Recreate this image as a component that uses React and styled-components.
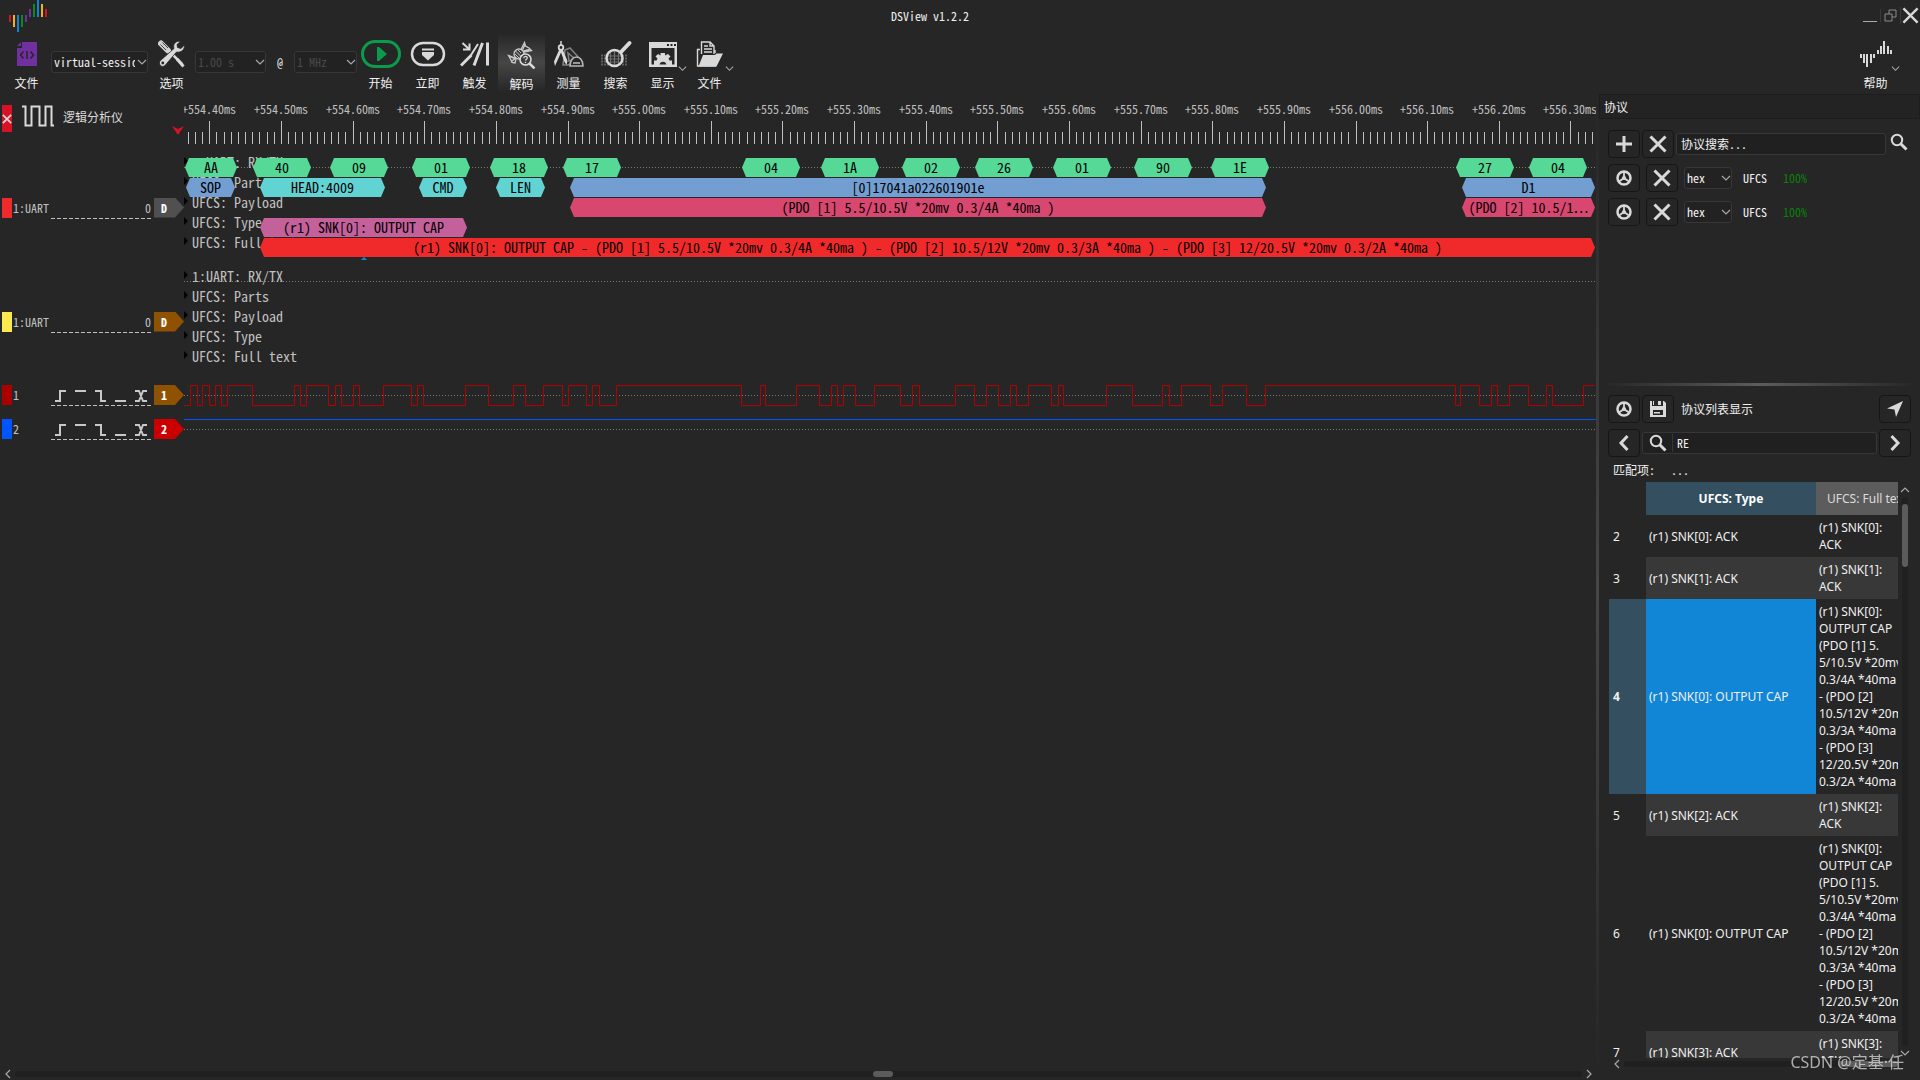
import React, { useState } from "react";
import styled, { createGlobalStyle, css } from "styled-components";

const mono = `"Noto Sans Mono CJK SC", "Liberation Mono", "Noto Sans CJK SC", monospace`;
const sans = `"Noto Sans", "Noto Sans CJK SC", sans-serif`;

const HEADER_W = 184;

// decoder annotations, start and end are distances on the time axis
const rxtx = [
  ["AA", 1, 53],
  ["40", 69, 127],
  ["09", 146, 204],
  ["01", 228, 286],
  ["18", 306, 364],
  ["17", 379, 437],
  ["04", 558, 616],
  ["1A", 637, 695],
  ["02", 718, 776],
  ["26", 791, 849],
  ["01", 869, 927],
  ["90", 950, 1008],
  ["1E", 1027, 1085],
  ["27", 1272, 1330],
  ["04", 1345, 1403],
].map(([text, start, end]) => ({ text, start, end, color: "#56d997" }));

const fullText =
  "(r1) SNK[0]: OUTPUT CAP - (PDO [1] 5.5/10.5V *20mv 0.3/4A *40ma ) - (PDO [2] 10.5/12V *20mv 0.3/3A *40ma ) - (PDO [3] 12/20.5V *20mv 0.3/2A *40ma )";

const decodedRows = [
  { name: "1:UART: RX/TX", axis: true, items: rxtx },
  {
    name: "UFCS: Parts",
    items: [
      { text: "SOP", start: 2, end: 51, color: "#729ed1" },
      { text: "HEAD:4009", start: 76, end: 201, color: "#62d3d3" },
      { text: "CMD", start: 235, end: 283, color: "#62d3d3" },
      { text: "LEN", start: 312, end: 361, color: "#62d3d3" },
      { text: "[0]17041a022601901e", start: 386, end: 1082, color: "#729ed1" },
      { text: "D1", start: 1278, end: 1411, color: "#729ed1" },
    ],
  },
  {
    name: "UFCS: Payload",
    items: [
      {
        text: "(PDO [1] 5.5/10.5V *20mv 0.3/4A *40ma )",
        start: 386,
        end: 1082,
        color: "#d8476f",
      },
      { text: "(PDO [2] 10.5/1⋯", start: 1278, end: 1411, color: "#d8476f" },
    ],
  },
  {
    name: "UFCS: Type",
    items: [
      {
        text: "(r1) SNK[0]: OUTPUT CAP",
        start: 76,
        end: 283,
        color: "#c4619a",
      },
    ],
  },
  {
    name: "UFCS: Full text",
    items: [{ text: fullText, start: 76, end: 1411, color: "#f02a2a" }],
  },
];

const emptyRows = decodedRows.map(({ name, axis }) => ({
  name,
  axis,
  items: [],
}));

// level changes of channel 1, it starts low
const edges = [
  6, 13, 18, 25, 31, 37, 43, 68, 110, 116, 122, 144, 151, 157, 169, 175, 199,
  227, 233, 239, 281, 304, 329, 341, 359, 378, 384, 402, 408, 415, 432, 557,
  576, 581, 612, 635, 647, 653, 659, 671, 690, 716, 728, 735, 771, 790, 802,
  814, 826, 832, 844, 867, 874, 879, 922, 948, 978, 985, 997, 1026, 1038, 1062,
  1081, 1271, 1276, 1295, 1307, 1313, 1325, 1344, 1362, 1368, 1399,
];

const wavePath =
  "M0 20.5" +
  edges
    .map((x, i) => `H${x + 0.5}V${i % 2 === 0 ? 0.5 : 20.5}`)
    .join("") +
  "H1411";

const longCell = `(r1) SNK[0]:
OUTPUT CAP
(PDO [1] 5.
5/10.5V *20mv
0.3/4A *40ma )
- (PDO [2]
10.5/12V *20mv
0.3/3A *40ma )
- (PDO [3]
12/20.5V *20mv
0.3/2A *40ma )`;

const tableRows = [
  { id: 2, type: "(r1) SNK[0]: ACK", full: "(r1) SNK[0]:\nACK" },
  { id: 3, type: "(r1) SNK[1]: ACK", full: "(r1) SNK[1]:\nACK" },
  { id: 4, type: "(r1) SNK[0]: OUTPUT CAP", full: longCell },
  { id: 5, type: "(r1) SNK[2]: ACK", full: "(r1) SNK[2]:\nACK" },
  { id: 6, type: "(r1) SNK[0]: OUTPUT CAP", full: longCell },
  { id: 7, type: "(r1) SNK[3]: ACK", full: "(r1) SNK[3]:\nACK" },
];

/* ---------- icons ---------- */

const Chevron = ({ dir = "down", w = 10 }) => {
  const paths = {
    down: "M1 3L5 7L9 3",
    up: "M1 7L5 3L9 7",
    left: "M7 1L3 5L7 9",
    right: "M3 1L7 5L3 9",
  };
  return (
    <svg width={w} height={w} viewBox="0 0 10 10" aria-hidden="true">
      <path d={paths[dir]} fill="none" stroke="#a8a8a8" strokeWidth="1.2" />
    </svg>
  );
};

const LogoBars = () => (
  <svg width="48" height="33" aria-hidden="true">
    {[
      [9, 15, 7, "#d81226"],
      [13, 15, 12, "#f5b021"],
      [17, 15, 17, "#1183d3"],
      [21, 15, 12, "#0d8a1d"],
      [25, 15, 7, "#7030a0"],
      [29, 9, 8, "#7030a0"],
      [33, 4, 13, "#0d8a1d"],
      [37, 0, 17, "#1183d3"],
      [41, 4, 13, "#f5b021"],
      [45, 9, 8, "#d81226"],
    ].map(([x, y, h, fill]) => (
      <rect key={x} x={x} y={y} width="2" height={h} fill={fill} />
    ))}
  </svg>
);

const HelpIcon = () => (
  <svg width="34" height="28" aria-hidden="true" fill="#d9d9d9">
    {[
      [1, 14, 4],
      [4, 14, 9],
      [7, 14, 13],
      [11, 14, 9],
      [14, 14, 4],
      [18, 10, 4],
      [21, 6, 8],
      [24, 1, 13],
      [28, 6, 8],
      [31, 10, 4],
    ].map(([x, y, h]) => (
      <rect key={x} x={x} y={y} width="2" height={h} />
    ))}
  </svg>
);

const SessionIcon = () => (
  <svg width="22" height="28" viewBox="0 0 22 28" aria-hidden="true">
    <path d="M6 2H21V26H1V8H6Z" fill="#7030a0" />
    <path d="M1 6L5 2V6Z" fill="#7030a0" />
    <path
      d="M7.500 11.500L4.500 15L7.500 18.500M14.500 11.500L17.500 15L14.500 18.500M11 11V19"
      fill="none"
      stroke="#262626"
      strokeWidth="1.500"
    />
  </svg>
);

const OptionsIcon = () => (
  <svg width="28" height="28" viewBox="0 0 28 28" aria-hidden="true">
    <path
      d="M3 3.500L10 10.500"
      stroke="#cfcfcf"
      strokeWidth="6"
      strokeLinecap="round"
    />
    <path
      d="M2.500 4.500L8 10M4.500 2.500L10 8"
      stroke="#262626"
      strokeWidth="0.800"
    />
    <path d="M11 11L24.500 24.500" stroke="#d9d9d9" strokeWidth="2.500" />
    <path d="M19 19L25.500 26.500" stroke="#d9d9d9" strokeWidth="3" />
    <path
      d="M22.500 1.500C18 0.500 14.500 4 16 8.500L2.500 20.500C-0.500 23.500 3.500 28.500 7 25.500L18.500 12C23 13 27 9.500 26.500 5L23 8.500L19.500 7.500L19 4.500Z"
      fill="#d9d9d9"
      stroke="#262626"
      strokeWidth="0.800"
    />
    <circle cx="4.800" cy="23" r="1.400" fill="#262626" />
  </svg>
);

const StartIcon = () => (
  <svg width="42" height="28" viewBox="0 0 42 28" aria-hidden="true">
    <rect
      x="2.500"
      y="1.500"
      width="37"
      height="25"
      rx="12.500"
      fill="none"
      stroke="#0a9b4b"
      strokeWidth="3"
    />
    <path d="M17 7H19L27 14L19 21H17Z" fill="#0a9b4b" />
  </svg>
);

const InstantIcon = () => (
  <svg width="36" height="28" viewBox="0 0 36 28" aria-hidden="true">
    <rect
      x="2"
      y="3"
      width="32"
      height="22"
      rx="11"
      fill="none"
      stroke="#d9d9d9"
      strokeWidth="2.500"
    />
    <path d="M12 8.500H24V10.500H12ZM12 12H24V15L18 20.500L12 15Z" fill="#d9d9d9" />
  </svg>
);

const TriggerIcon = () => (
  <svg width="30" height="28" viewBox="0 0 30 28" aria-hidden="true">
    <path
      d="M1 25.500L11.500 15M14 25.500L22.500 3M27.500 2.500V25.500"
      fill="none"
      stroke="#d9d9d9"
      strokeWidth="3"
    />
    <path d="M11 15L18 4" stroke="#d9d9d9" strokeWidth="2" />
    <path
      d="M2.500 3L9 9M9.500 3.500V9.500H3"
      fill="none"
      stroke="#d9d9d9"
      strokeWidth="2"
    />
  </svg>
);

const DecodeIcon = () => (
  <svg width="30" height="28" viewBox="0 0 30 28" aria-hidden="true">
    <g fill="none" stroke="#c9c9c9" strokeWidth="1.300">
      <circle cx="12" cy="13" r="5" />
      <path d="M8 17L1.500 14.500L3.500 18L5 21.500L8 22L9 18M3 15.500L8 18M5 20L9 17" />
      <path d="M14 8.500L17.500 1.500L18.500 5L22 7L24.500 9.500L17 11M18 3.500L15.500 9M22.500 8.500L16.500 10" />
      <path d="M8.500 10L15 16.500M10.500 8.500L14 12M8 13L12 17" strokeWidth="1" />
    </g>
    <circle
      cx="18.500"
      cy="18.500"
      r="5.500"
      fill="#3c3c3c"
      stroke="#d9d9d9"
      strokeWidth="1.600"
    />
    <path d="M22.500 22.500L27.500 27.500" stroke="#d9d9d9" strokeWidth="2.500" />
    <path
      d="M16.800 17.200C16.800 14.800 20.300 14.900 20.200 17C20.100 18.300 18.500 18.300 18.500 19.600M18.500 20.700V22"
      fill="none"
      stroke="#d9d9d9"
      strokeWidth="1.300"
    />
  </svg>
);

const MeasureIcon = () => (
  <svg width="32" height="28" viewBox="0 0 32 28" aria-hidden="true">
    <g fill="none" stroke="#808080" strokeWidth="1.600">
      <path d="M12 10L17 8L27 19L15 25L10 25Z" />
      <path d="M15 13L22 19L16 21Z" />
      <path d="M17 26C17 14 30 14 30 26Z" fill="#262626" stroke="#b5b5b5" />
      <path d="M20 23H27" stroke="#b5b5b5" />
    </g>
    <path d="M8 1V5" stroke="#d9d9d9" strokeWidth="1.500" />
    <circle
      cx="8"
      cy="7.500"
      r="2.300"
      fill="none"
      stroke="#d9d9d9"
      strokeWidth="1.800"
    />
    <path
      d="M6.500 9H9.500L14.500 21L13.500 25L11.500 22L8 12.500L4 21.500L2 26L1 21.500Z"
      fill="#d9d9d9"
    />
  </svg>
);

const SearchTextIcon = () => (
  <svg width="34" height="28" viewBox="0 0 34 28" aria-hidden="true">
    <path
      d="M2 15.500H28M2 18.500H28M2 21.500H28M2 24.500H28"
      stroke="#606060"
      strokeWidth="2"
      strokeDasharray="2 1"
    />
    <circle cx="15.500" cy="18" r="8" fill="#262626" />
    <path
      d="M9 16H22M9 19H22M11 22H20M11.500 13V23M15.500 11V25M19.500 13V23"
      stroke="#707070"
      strokeWidth="1.200"
    />
    <circle
      cx="15.500"
      cy="18"
      r="8"
      fill="none"
      stroke="#d9d9d9"
      strokeWidth="2.500"
    />
    <path
      d="M22 12L30.500 3"
      stroke="#d9d9d9"
      strokeWidth="4"
      strokeLinecap="round"
    />
  </svg>
);

const DisplayIcon = () => (
  <svg width="30" height="28" viewBox="0 0 30 28" aria-hidden="true">
    <path d="M1 2H29V27H1ZM3.500 8V24.500H26.500V8Z" fill="#d9d9d9" fillRule="evenodd" />
    <path d="M19 4H21V6H19ZM22.500 4H24.500V6H22.500ZM26 4H28V6H26Z" fill="#262626" />
    <path
      d="M6 25V20.500H8.500L9.500 18.500L7.500 16.500L10 14L12.500 15.500V13H17V15.500L20 14L22.500 16.500L20.500 18.500L21.500 20.500H24V25H18.500C18.500 20.500 11.500 20.500 11.500 25Z"
      fill="#d9d9d9"
    />
  </svg>
);

const FolderIcon = () => (
  <svg width="28" height="28" viewBox="0 0 28 28" aria-hidden="true">
    <path
      d="M5.500 14V2H14L18 6V14M14 2V6H18M8 6H12M8 9H16M8 12H16"
      fill="none"
      stroke="#d9d9d9"
      strokeWidth="1.400"
    />
    <path
      d="M4 9.500H1.500V26H20M19 10V13"
      fill="none"
      stroke="#d9d9d9"
      strokeWidth="1.400"
    />
    <path d="M7 15H19L20.500 13.500H27L20.500 26.500H2.500Z" fill="#d9d9d9" />
  </svg>
);

const PlusIcon = () => (
  <svg width="18" height="18" aria-hidden="true">
    <path d="M9 1V17M1 9H17" stroke="#d9d9d9" strokeWidth="3" />
  </svg>
);

const CrossIcon = ({ size = 18, width = 3 }) => (
  <svg width={size} height={size} viewBox="0 0 18 18" aria-hidden="true">
    <path
      d="M1.500 1.500L16.500 16.500M16.500 1.500L1.500 16.500"
      stroke="#d9d9d9"
      strokeWidth={width}
    />
  </svg>
);

const WheelIcon = () => (
  <svg width="16" height="16" viewBox="0 0 16 16" aria-hidden="true">
    <circle cx="8" cy="8" r="6.500" fill="none" stroke="#d9d9d9" strokeWidth="2.500" />
    <path
      d="M8 8V2M8 8L3 11.500M8 8L13 11.500"
      stroke="#d9d9d9"
      strokeWidth="1.800"
    />
    <circle cx="8" cy="8" r="2" fill="#d9d9d9" />
  </svg>
);

const LensIcon = () => (
  <svg width="18" height="18" viewBox="0 0 18 18" aria-hidden="true">
    <circle cx="7" cy="7" r="5.200" fill="none" stroke="#d9d9d9" strokeWidth="2" />
    <path d="M10.500 10.500L16.500 16.500" stroke="#d9d9d9" strokeWidth="3" />
  </svg>
);

const SaveIcon = () => (
  <svg width="18" height="18" viewBox="0 0 18 18" aria-hidden="true">
    <path
      d="M1 1H3V6H14V1H15L17 3V17H1ZM4 10V15H14V10Z"
      fill="#d9d9d9"
      fillRule="evenodd"
    />
    <path d="M4 1H5V5H4ZM9 1H12V5H9ZM5 12H11V13.500H5Z" fill="#d9d9d9" />
  </svg>
);

const SendIcon = () => (
  <svg width="18" height="18" viewBox="0 0 18 18" aria-hidden="true">
    <path d="M17 1L10 17L8.500 9.500L1 8.500Z" fill="#d9d9d9" />
  </svg>
);

const ArrowIcon = ({ dir }) => (
  <svg width="12" height="18" viewBox="0 0 12 18" aria-hidden="true">
    <path
      d={dir === "left" ? "M9.500 2L3 9L9.500 16" : "M2.500 2L9 9L2.500 16"}
      fill="none"
      stroke="#d9d9d9"
      strokeWidth="3"
    />
  </svg>
);

const triggers = {
  上升沿: "M0 11H5V1H11",
  高电平: "M0 1H11",
  下降沿: "M0 1H6V11H11",
  低电平: "M0 11H11",
  双边沿: "M0 1H4L8 11H12M0 11H4L8 1H12",
};

/* ---------- parts ---------- */

const GlobalStyle = createGlobalStyle`
  * {
    box-sizing: border-box;
  }
  body {
    margin: 0;
    background: #262626;
    color: #f0f0f0;
    font: 12px/16px ${mono};
    overflow: hidden;
  }
  button, input, select {
    margin: 0;
    padding: 0;
    border: none;
    background: none;
    color: inherit;
    font: inherit;
    outline: none;
  }
  svg {
    display: block;
    flex: none;
  }
`;

const Window = styled.div`
  display: flex;
  flex-direction: column;
  height: 100vh;
`;

const TitleBar = styled.header`
  display: grid;
  grid-template-columns: 1fr 60px;
  height: 33px;
`;

const Logo = styled.div`
  grid-area: 1 / 1;
`;

const Title = styled.h1`
  grid-area: 1 / 1;
  margin: 0;
  padding-top: 8px;
  font-size: 12px;
  font-weight: normal;
  text-align: center;
`;

const WindowButtons = styled.div`
  display: flex;
  align-items: center;
  height: 30px;
`;

const WindowButton = styled.button`
  display: flex;
  justify-content: center;
  width: 20px;
  & + & {
    border-left: 1px solid #3a3a3a;
  }
`;

const Toolbar = styled.nav`
  display: flex;
  align-items: flex-start;
  height: 60px;
  padding: 0 21px 0 3px;
`;

const ToolButton = styled.button`
  position: relative;
  display: flex;
  flex: none;
  flex-direction: column;
  align-items: center;
  gap: 7px;
  width: 47px;
  height: 59px;
  padding-top: 7px;
  ${(p) =>
    p.$active &&
    css`
      padding-top: 8px;
      background: linear-gradient(#262626, #464646 50%, #262626);
    `}
`;

const MenuMark = styled.span`
  position: absolute;
  right: -1px;
  top: 31px;
`;

const Spacer = styled.div`
  flex: 1;
`;

const ComboBox = styled.span`
  position: relative;
  display: block;
  flex: none;
  width: ${(p) => p.$width}px;
  margin: ${(p) => p.$margin || "0"};
  color: ${(p) => (p.$dim ? "#4a4a4a" : "#f0f0f0")};
  svg {
    position: absolute;
    right: 1px;
    top: 6px;
  }
  select {
    appearance: none;
    display: block;
    width: 100%;
    height: 22px;
    padding: 0 12px 0 2px;
    border: 1px solid #373737;
    border-radius: 3px;
    background: #222222;
    color: inherit;
    opacity: 1;
  }
`;

const At = styled.span`
  width: 28px;
  margin-top: 21px;
  text-align: center;
`;

const Workspace = styled.main`
  display: flex;
  flex: 1;
  min-height: 0;
`;

const Session = styled.section`
  display: flex;
  flex: 1;
  flex-direction: column;
  min-width: 0;
`;

const Splitter = styled.div`
  flex: none;
  width: 3px;
  background: linear-gradient(#262626, #464646 50%, #262626);
`;

const SplitRow = styled.div`
  display: grid;
  grid-template-columns: ${HEADER_W}px 1fr;
  color: #c0c0c0;
`;

const LogicRow = styled(SplitRow)`
  height: 20px;
`;

const DeviceHead = styled.div`
  position: relative;
  display: flex;
  align-items: flex-start;
  gap: 8px;
  height: 65px;
  padding: 12px 0 0 2px;
  color: #d9d9d9;
  > svg:last-child {
    position: absolute;
    right: 0;
    top: 33px;
  }
`;

const CloseDevice = styled.button`
  display: flex;
  align-items: center;
  width: 10px;
  height: 27px;
  margin-right: 1px;
  background: #d81226;
`;

const DeviceName = styled.span`
  margin-top: 4px;
`;

const Ruler = styled.div`
  position: relative;
  height: 65px;
  overflow: hidden;
  svg {
    width: 100%;
    height: 51px;
  }
`;

const RulerLabel = styled.span`
  position: absolute;
  top: 8px;
  transform: translateX(-50%);
`;

const Signals = styled.div`
  display: flex;
  flex-direction: column;
  gap: 14px;
  & + & {
    margin-top: 13px;
  }
`;

const SignalHead = styled.div`
  display: flex;
  align-items: center;
  align-self: center;
  height: 20px;
  padding-left: 2px;
  margin-bottom: 1px;
`;

const Swatch = styled.span`
  flex: none;
  width: 10px;
  height: 20px;
  margin-right: 1px;
  background: ${(p) => p.$color};
`;

const SignalName = styled.span`
  width: 38px;
  white-space: nowrap;
`;

const SignalTools = styled.div`
  display: flex;
  justify-content: ${(p) => (p.$end ? "flex-end" : "flex-start")};
  align-items: center;
  width: 100px;
  height: 21px;
  margin: 1px 3px 0 0;
  background: repeating-linear-gradient(90deg, #c0c0c0 0 4px, transparent 4px 6px)
    bottom / 100% 1px no-repeat;
`;

const TriggerButton = styled.button`
  display: flex;
  justify-content: center;
  width: 20px;
`;

const Tag = styled.span`
  width: 30px;
  height: 20px;
  padding-left: 7px;
  background: ${(p) => p.$color};
  clip-path: polygon(0 0, 21px 0, 100% 50%, 21px 100%, 0 100%);
  color: #ffffff;
  font-weight: bold;
  line-height: 20px;
`;

const DecodeArea = styled.div`
  position: relative;
  min-width: 0;
`;

const DecodeRow = styled.div`
  position: relative;
  height: 20px;
  ${(p) =>
    p.$axis &&
    css`
      background: repeating-linear-gradient(
          90deg,
          #7a7a7a 0 1px,
          transparent 1px 3px
        )
        0 9px / 100% 1px no-repeat;
    `}
`;

const RowName = styled.span`
  position: absolute;
  left: 0;
  top: -6px;
  padding-left: 8px;
  font-size: 14px;
  line-height: 20px;
  white-space: pre;
  &::before {
    content: "";
    position: absolute;
    left: 0;
    top: 5px;
    border: 4px solid transparent;
    border-left-color: #000000;
    border-right: none;
  }
`;

const Annotation = styled.span`
  position: absolute;
  top: 0;
  height: 19px;
  overflow: hidden;
  clip-path: polygon(
    4px 0,
    calc(100% - 4px) 0,
    100% 50%,
    calc(100% - 4px) 100%,
    4px 100%,
    0 50%
  );
  color: #000000;
  font-size: 14px;
  line-height: 19px;
  text-align: center;
  white-space: nowrap;
`;

const ExpandMark = styled.span`
  position: absolute;
  left: 177px;
  bottom: -2px;
  border: 3px solid transparent;
  border-top: none;
  border-bottom-color: #1185d6;
`;

const Wave = styled.svg`
  width: 100%;
  height: 21px;
`;

const ScrollBar = styled.div`
  display: flex;
  flex-direction: ${(p) => (p.$vertical ? "column" : "row")};
  align-items: center;
  gap: 2px;
  padding: ${(p) => p.$pad || "0"};
`;

const Groove = styled.div`
  display: flex;
  flex: 1;
  flex-direction: ${(p) => (p.$vertical ? "column" : "row")};
  border-radius: 3px;
  background: #202020;
  ${(p) => (p.$vertical ? "width: 6px;" : "height: 6px;")}
`;

const Thumb = styled.div`
  flex: none;
  width: ${(p) => p.$w || 6}px;
  height: ${(p) => p.$h || 6}px;
  margin-top: ${(p) => p.$top || 0}px;
  margin-left: ${(p) => p.$left || "0"};
  border-radius: 3px;
  background: #5c5c5c;
`;

const Dock = styled.aside`
  display: flex;
  flex: none;
  flex-direction: column;
  width: 321px;
  padding-top: 1px;
`;

const DockTitle = styled.h2`
  flex: none;
  height: 25px;
  margin: 0;
  padding-left: 4px;
  border: 1px solid #1d1d1d;
  background: #232323;
  font-size: 12px;
  font-weight: normal;
  line-height: 24px;
`;

const DecoderList = styled.div`
  display: flex;
  flex: none;
  flex-direction: column;
  gap: 6px;
  height: 264px;
  padding: 11px 9px 0;
`;

const DockRow = styled.div`
  display: flex;
  align-items: center;
  gap: ${(p) => p.$gap || 2}px;
`;

const SquareButton = styled.button`
  display: flex;
  flex: none;
  align-items: center;
  justify-content: center;
  width: 32px;
  height: 28px;
  border: 1px solid #161616;
  border-radius: 4px;
`;

const IconButton = styled.button`
  padding: 0 3px 4px 2px;
`;

const Field = styled.div`
  display: flex;
  flex: 1;
  align-items: center;
  min-width: 0;
  height: 22px;
  border: 1px solid #373737;
  border-radius: 3px;
  background: #202020;
  input {
    flex: 1;
    min-width: 0;
    padding-left: 4px;
  }
  input::placeholder {
    color: #f0f0f0;
    opacity: 1;
  }
  button {
    display: flex;
    justify-content: center;
    width: 30px;
    border-right: 1px solid #373737;
  }
`;

const DecoderName = styled.span`
  width: 34px;
  margin-left: 5px;
`;

const Progress = styled.span`
  color: #0a800a;
`;

const DockSplitter = styled.div`
  flex: none;
  height: 3px;
  margin: 0 3px;
  background: linear-gradient(90deg, #262626, #5c5c5c 50%, #262626);
`;

const ResultPane = styled.div`
  display: flex;
  flex: 1;
  flex-direction: column;
  gap: 6px;
  min-height: 0;
  padding: 9px 9px 0;
`;

const PaneTitle = styled.span`
  flex: 1;
  padding-left: 5px;
`;

const MatchLine = styled.div`
  display: flex;
  gap: 16px;
  padding: 0 5px;
  line-height: 13px;
`;

const ResultGrid = styled.div`
  display: grid;
  flex: 1;
  grid-template-columns: 1fr 13px;
  grid-template-rows: 1fr 22px;
  min-height: 0;
  padding-left: 1px;
`;

const TableView = styled.div`
  overflow: hidden;
`;

const ResultTable = styled.table`
  width: 309px;
  border-collapse: collapse;
  table-layout: fixed;
  font: 12px/17px ${sans};
  th,
  td {
    padding: 4px 3px;
    text-align: left;
    white-space: pre;
  }
  tbody th {
    padding-left: 4px;
    font-weight: normal;
  }
  thead th {
    height: 33px;
    padding: 0;
    text-align: center;
  }
`;

const HeadCell = styled.th`
  background: ${(p) => (p.$current ? "#344f60" : "#5c5c5c")};
  color: ${(p) => (p.$current ? "#ffffff" : "#dcdcdc")};
  font-weight: ${(p) => (p.$current ? "bold" : "normal")};
`;

const TableRow = styled.tr`
  td {
    background: ${(p) => (p.$alt ? "#383838" : "transparent")};
  }
  ${(p) =>
    p.$current &&
    css`
      th[scope="row"] {
        background: #344f60;
        font-weight: bold;
      }
      td:nth-child(2) {
        background: #1185d6;
      }
    `}
`;

const Watermark = styled.div`
  position: fixed;
  right: 16px;
  bottom: 6px;
  color: rgba(220, 220, 220, 0.75);
  font: 16px/24px ${sans};
`;

/* ---------- views ---------- */

function Combo({ label, options, width, margin, dim }) {
  return (
    <ComboBox $width={width} $margin={margin} $dim={dim}>
      <select aria-label={label} disabled={dim}>
        {options.map((o) => (
          <option key={o}>{o}</option>
        ))}
      </select>
      <Chevron />
    </ComboBox>
  );
}

function Tool({ icon, label, active, menu, onClick }) {
  return (
    <ToolButton $active={active} onClick={onClick}>
      {icon}
      {label}
      {menu && (
        <MenuMark>
          <Chevron w={9} />
        </MenuMark>
      )}
    </ToolButton>
  );
}

function TimeRuler() {
  const step = 71.64;
  const first = 25.3;
  const ticks = [];
  for (let i = -3; i <= 193; i++) {
    const x = Math.round(first + (i * step) / 10) + 0.5;
    ticks.push(`M${x} ${i % 10 === 0 ? 28 : 39}V51`);
  }
  return (
    <Ruler>
      <svg>
        <path d={ticks.join("")} stroke="#c0c0c0" />
      </svg>
      {Array.from({ length: 20 }, (_, i) => (
        <RulerLabel key={i} style={{ left: Math.round(first + i * step) }}>
          +{(554.4 + i / 10).toFixed(2)}ms
        </RulerLabel>
      ))}
    </Ruler>
  );
}

function DecodeSignal({ swatch, tag, rows, mark }) {
  return (
    <SplitRow>
      <SignalHead>
        <Swatch $color={swatch} />
        <SignalName>1:UART</SignalName>
        <SignalTools $end>0</SignalTools>
        <Tag $color={tag}>D</Tag>
      </SignalHead>
      <DecodeArea>
        {rows.map((row) => (
          <DecodeRow key={row.name} $axis={row.axis}>
            <RowName>{row.name}</RowName>
            {row.items.map((a) => (
              <Annotation
                key={a.start}
                style={{
                  left: a.start,
                  width: a.end - a.start,
                  background: a.color,
                }}
              >
                {a.text}
              </Annotation>
            ))}
          </DecodeRow>
        ))}
        {mark && <ExpandMark />}
      </DecodeArea>
    </SplitRow>
  );
}

function LogicSignal({ name, swatch, tag, children }) {
  return (
    <LogicRow>
      <SignalHead>
        <Swatch $color={swatch} />
        <SignalName>{name}</SignalName>
        <SignalTools>
          {Object.entries(triggers).map(([title, d]) => (
            <TriggerButton key={title} aria-label={title}>
              <svg width="12" height="12">
                <path d={d} fill="none" stroke="#c8c8c8" strokeWidth="2" />
              </svg>
            </TriggerButton>
          ))}
        </SignalTools>
        <Tag $color={tag}>{name}</Tag>
      </SignalHead>
      <Wave>
        <path d="M0 10.5H3000" stroke="#7a7a7a" strokeDasharray="1 2" />
        {children}
      </Wave>
    </LogicRow>
  );
}

function DecoderItem() {
  return (
    <DockRow $gap={6}>
      <SquareButton aria-label="设置">
        <WheelIcon />
      </SquareButton>
      <SquareButton aria-label="删除">
        <CrossIcon />
      </SquareButton>
      <Combo label="格式" options={["hex"]} width={48} />
      <DecoderName>UFCS</DecoderName>
      <Progress>100%</Progress>
    </DockRow>
  );
}

export default function App() {
  const [tool, setTool] = useState("解码");
  const [query, setQuery] = useState("RE");
  const [selected, setSelected] = useState(4);

  return (
    <Window>
      <GlobalStyle />
      <TitleBar>
        <Logo>
          <LogoBars />
        </Logo>
        <Title>DSView v1.2.2</Title>
        <WindowButtons>
          <WindowButton aria-label="最小化">
            <svg width="14" height="16">
              <path d="M0 14.500H14" stroke="#a8a8a8" />
            </svg>
          </WindowButton>
          <WindowButton aria-label="还原">
            <svg width="13" height="13">
              <path
                d="M1 5H8V12H1ZM5 5V1H12V8H8"
                fill="none"
                stroke="#8a8a8a"
              />
            </svg>
          </WindowButton>
          <WindowButton aria-label="关闭">
            <CrossIcon size={17} width={2.5} />
          </WindowButton>
        </WindowButtons>
      </TitleBar>

      <Toolbar>
        <Tool icon={<SessionIcon />} label="文件" />
        <Combo
          label="设备"
          options={["virtual-session"]}
          width={97}
          margin="18px 0 0 1px"
        />
        <Tool icon={<OptionsIcon />} label="选项" />
        <Combo
          label="采样时长"
          options={["1.00 s"]}
          width={71}
          margin="18px 0 0"
          dim
        />
        <At>@</At>
        <Combo
          label="采样率"
          options={["1 MHz"]}
          width={63}
          margin="18px 0 0"
          dim
        />
        <Tool icon={<StartIcon />} label="开始" />
        <Tool icon={<InstantIcon />} label="立即" />
        <Tool icon={<TriggerIcon />} label="触发" />
        <Tool
          icon={<DecodeIcon />}
          label="解码"
          active={tool === "解码"}
          onClick={() => setTool(tool === "解码" ? "" : "解码")}
        />
        <Tool icon={<MeasureIcon />} label="测量" />
        <Tool icon={<SearchTextIcon />} label="搜索" />
        <Tool icon={<DisplayIcon />} label="显示" menu />
        <Tool icon={<FolderIcon />} label="文件" menu />
        <Spacer />
        <Tool icon={<HelpIcon />} label="帮助" menu />
      </Toolbar>

      <Workspace>
        <Session>
          <SplitRow>
            <DeviceHead>
              <CloseDevice aria-label="关闭设备">
                <CrossIcon size={10} width={3} />
              </CloseDevice>
              <svg width="34" height="22">
                <path
                  d="M1 1.500H4.500V20.500H10.500V1.500H18.500V20.500H24.500V1.500H30.500V20.500H33"
                  fill="none"
                  stroke="#d9d9d9"
                  strokeWidth="2"
                />
              </svg>
              <DeviceName>逻辑分析仪</DeviceName>
              <svg width="12" height="9">
                <path d="M0 0L6 3L12 0L6 9Z" fill="#d81226" />
              </svg>
            </DeviceHead>
            <TimeRuler />
          </SplitRow>
          <Signals>
            <DecodeSignal
              swatch="#f02a2a"
              tag="#505050"
              rows={decodedRows}
              mark
            />
            <DecodeSignal swatch="#fce94f" tag="#8f5202" rows={emptyRows} />
          </Signals>
          <Signals>
            <LogicSignal name="1" swatch="#aa0000" tag="#8f5202">
              <path d={wavePath} fill="none" stroke="#b40000" />
            </LogicSignal>
            <LogicSignal name="2" swatch="#0055ff" tag="#cc0000">
              <path d="M0 0.5H3000" stroke="#0055ff" />
            </LogicSignal>
          </Signals>
          <Spacer />
          <ScrollBar $pad="0 2px 1px 3px">
            <Chevron dir="left" />
            <Groove>
              <Thumb $w={20} $left="calc(55% - 4px)" />
            </Groove>
            <Chevron dir="right" />
          </ScrollBar>
        </Session>

        <Splitter />

        <Dock>
          <DockTitle>协议</DockTitle>
          <DecoderList>
            <DockRow>
              <SquareButton aria-label="添加">
                <PlusIcon />
              </SquareButton>
              <SquareButton aria-label="全部删除">
                <CrossIcon />
              </SquareButton>
              <Field>
                <input aria-label="协议搜索" placeholder="协议搜索..." />
              </Field>
              <IconButton aria-label="搜索">
                <LensIcon />
              </IconButton>
            </DockRow>
            <DecoderItem />
            <DecoderItem />
          </DecoderList>
          <DockSplitter />
          <ResultPane>
            <DockRow>
              <SquareButton aria-label="列表设置">
                <WheelIcon />
              </SquareButton>
              <SquareButton aria-label="保存">
                <SaveIcon />
              </SquareButton>
              <PaneTitle>协议列表显示</PaneTitle>
              <SquareButton aria-label="导航">
                <SendIcon />
              </SquareButton>
            </DockRow>
            <DockRow>
              <SquareButton aria-label="上一个">
                <ArrowIcon dir="left" />
              </SquareButton>
              <Field>
                <button aria-label="查找">
                  <LensIcon />
                </button>
                <input
                  aria-label="查找内容"
                  value={query}
                  onChange={(e) => setQuery(e.target.value)}
                />
              </Field>
              <SquareButton aria-label="下一个">
                <ArrowIcon dir="right" />
              </SquareButton>
            </DockRow>
            <MatchLine>
              <span>匹配项:</span>
              <span>...</span>
            </MatchLine>
            <ResultGrid>
              <TableView>
                <ResultTable>
                  <colgroup>
                    <col style={{ width: 37 }} />
                    <col style={{ width: 170 }} />
                    <col style={{ width: 102 }} />
                  </colgroup>
                  <thead>
                    <tr>
                      <td />
                      <HeadCell $current>UFCS: Type</HeadCell>
                      <HeadCell>UFCS: Full text</HeadCell>
                    </tr>
                  </thead>
                  <tbody>
                    {tableRows.map((row) => (
                      <TableRow
                        key={row.id}
                        $alt={row.id % 2 === 1}
                        $current={row.id === selected}
                        onClick={() => setSelected(row.id)}
                      >
                        <th scope="row">{row.id}</th>
                        <td>{row.type}</td>
                        <td>{row.full}</td>
                      </TableRow>
                    ))}
                  </tbody>
                </ResultTable>
              </TableView>
              <ScrollBar $vertical $pad="3px 0 0">
                <Chevron dir="up" />
                <Groove $vertical>
                  <Thumb $h={63} $top={7} />
                </Groove>
                <Chevron dir="down" />
              </ScrollBar>
              <ScrollBar $pad="0 0 10px 3px">
                <Chevron dir="left" />
                <Groove>
                  <Thumb $w={60} $left="auto" />
                </Groove>
              </ScrollBar>
            </ResultGrid>
          </ResultPane>
        </Dock>
      </Workspace>
      <Watermark>CSDN @定基·任</Watermark>
    </Window>
  );
}
